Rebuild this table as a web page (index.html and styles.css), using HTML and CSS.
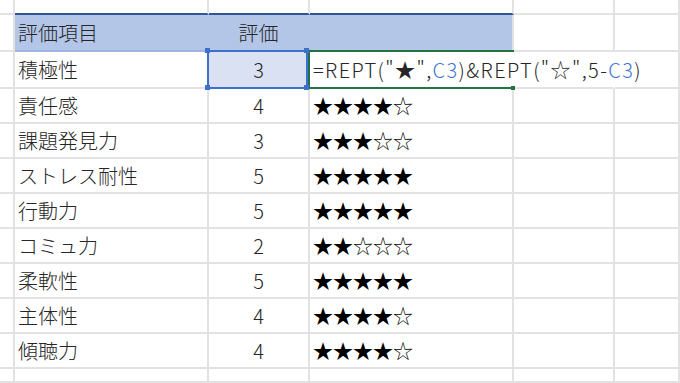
FILE: index.html
```html
<!DOCTYPE html>
<html lang="ja">
<head>
<meta charset="utf-8">
<title>評価シート</title>
<link rel="stylesheet" href="styles.css">
</head>
<body>
<div class="sheet">
  <div class="c"></div><div class="c top-edge"></div><div class="c top-edge"></div><div class="c top-edge"></div><div class="c"></div><div class="c"></div>

  <div class="c"></div><div class="c hd txt">評価項目</div><div class="c hd num">評価</div><div class="c hd hd-last"></div><div class="c"></div><div class="c"></div>

  <div class="c"></div><div class="c txt">積極性</div>
  <div class="c num sel">3<span class="h tl"></span><span class="h tr"></span><span class="h bl"></span><span class="h br"></span></div>
  <div class="c stars edit no-r"><span class="formula">=REPT("★",<span class="ref">C3</span>)&amp;REPT("☆",5-<span class="ref">C3</span>)</span><span class="gh"></span></div>
  <div class="c no-r"></div><div class="c"></div>

  <div class="c"></div><div class="c txt">責任感</div><div class="c num">4</div><div class="c stars">★★★★☆</div><div class="c"></div><div class="c"></div>
  <div class="c"></div><div class="c txt">課題発見力</div><div class="c num">3</div><div class="c stars">★★★☆☆</div><div class="c"></div><div class="c"></div>
  <div class="c"></div><div class="c txt">ストレス耐性</div><div class="c num">5</div><div class="c stars">★★★★★</div><div class="c"></div><div class="c"></div>
  <div class="c"></div><div class="c txt">行動力</div><div class="c num">5</div><div class="c stars">★★★★★</div><div class="c"></div><div class="c"></div>
  <div class="c"></div><div class="c txt">コミュ力</div><div class="c num">2</div><div class="c stars">★★☆☆☆</div><div class="c"></div><div class="c"></div>
  <div class="c"></div><div class="c txt">柔軟性</div><div class="c num">5</div><div class="c stars">★★★★★</div><div class="c"></div><div class="c"></div>
  <div class="c"></div><div class="c txt">主体性</div><div class="c num">4</div><div class="c stars">★★★★☆</div><div class="c"></div><div class="c"></div>
  <div class="c"></div><div class="c txt">傾聴力</div><div class="c num">4</div><div class="c stars">★★★★☆</div><div class="c"></div><div class="c"></div>

  <div class="c"></div><div class="c"></div><div class="c"></div><div class="c"></div><div class="c"></div><div class="c"></div>
</div>
</body>
</html>
```
FILE: styles.css
```css
html, body {
  margin: 0;
  padding: 0;
  background: #ffffff;
  overflow: hidden;
}

.sheet {
  width: 680px;
  height: 383px;
  display: grid;
  grid-template-columns: 15px 194px 101px 204px 101px 1fr;
  grid-template-rows: 15px 37px 37px repeat(8, 35px) 1fr;
  font-family: "Noto Sans CJK JP", "Noto Sans", sans-serif;
  font-size: 20px;
  font-weight: 300;
  color: #262626;
}

.c {
  border-right: 2px solid #e2e2e2;
  border-bottom: 2px solid #e2e2e2;
  display: flex;
  align-items: center;
  min-width: 0;
  white-space: nowrap;
}

.top-edge {
  border-bottom-color: #2f5597;
}

.hd {
  background: #b4c6e7;
  border-right-color: #b4c6e7;
  border-bottom-color: #9fb4df;
}

.hd-last {
  border-right-color: #e2e2e2;
}

.txt {
  padding-left: 3px;
}

.num {
  justify-content: center;
}

.stars {
  padding-left: 3px;
  color: #000000;
}

.no-r {
  border-right-color: transparent;
}

.sel {
  position: relative;
  background: #d9e1f2;
}

.sel::after {
  content: "";
  position: absolute;
  top: -2px;
  left: -2px;
  right: 0;
  bottom: -2px;
  border: 2px solid #3d6fcb;
}

.h {
  position: absolute;
  width: 5px;
  height: 5px;
  background: #3d6fcb;
  z-index: 2;
}

.h.tl { left: -4px; top: -4px; }
.h.tr { left: 95px; top: -4px; }
.h.bl { left: -4px; top: 33px; }
.h.br { left: 95px; top: 33px; }

.edit {
  position: relative;
  overflow: visible;
  z-index: 1;
}

.edit::after {
  content: "";
  position: absolute;
  top: -2px;
  left: -2px;
  right: -2px;
  bottom: -2px;
  border: 2px solid #217346;
  border-right: none;
}

.gh {
  position: absolute;
  right: -3px;
  bottom: -3px;
  width: 4px;
  height: 4px;
  background: #217346;
}

.formula {
  color: #262626;
  letter-spacing: 1.4px;
}

.ref {
  color: #3f73d6;
}
```
